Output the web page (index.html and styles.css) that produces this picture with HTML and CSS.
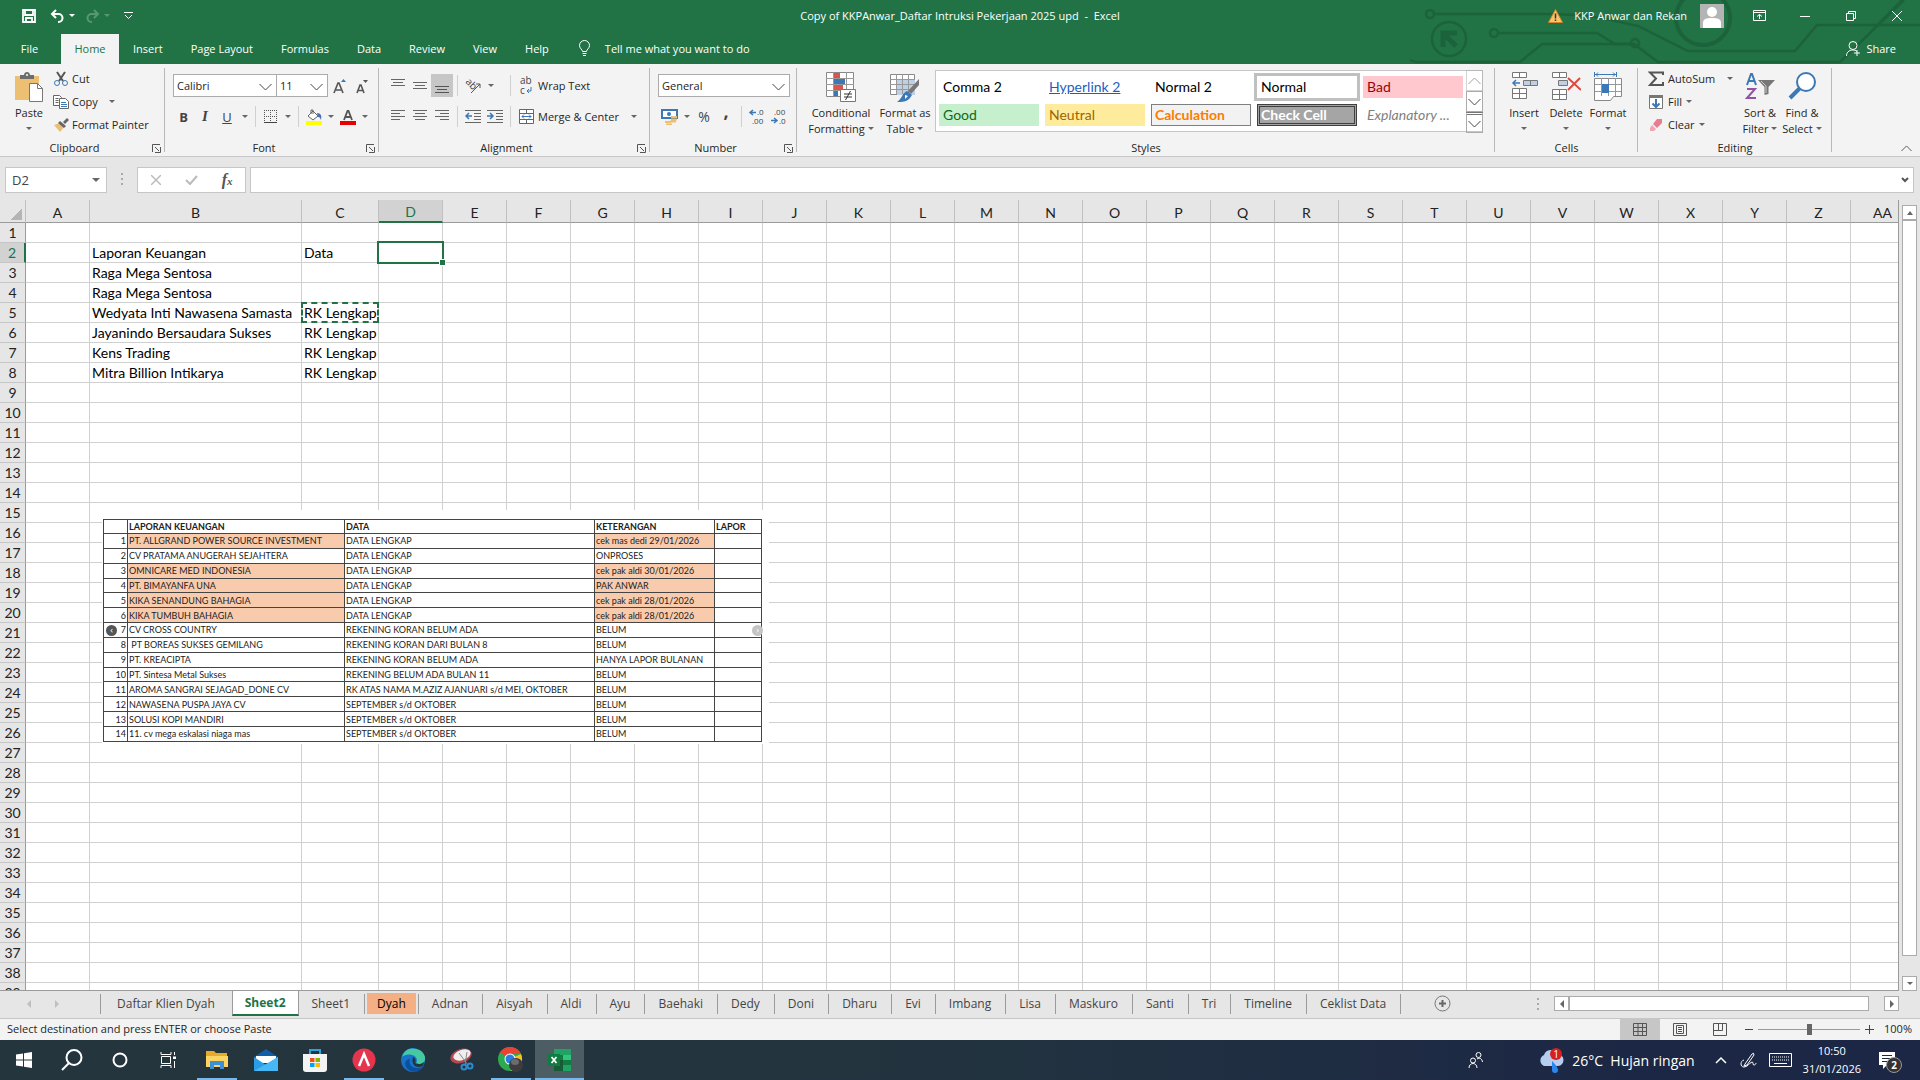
FILE: index.html
```html
<!DOCTYPE html>
<html lang="en">
<head>
  <meta charset="UTF-8" />
  <meta name="viewport" content="width=device-width, initial-scale=1.0"/>
  <title>Copy of KKPAnwar_Daftar Intruksi Pekerjaan 2025 upd - Excel</title>
  <link rel="stylesheet" href="styles.css">
</head>
<body>

<!-- shared icons -->
<svg class="defs" aria-hidden="true">
  <symbol id="launcher" viewBox="0 0 9 9"><path d="M.5 8V.5H8M3 3l4 4M8.500 3v5.500H3" fill="none" stroke="#555"/></symbol>
  <symbol id="chev" viewBox="0 0 13 8"><path d="M.5 1l6 6 6-6" fill="none" stroke="#444"/></symbol>
</svg>

<header class="top">
  <svg class="circuit" width="510" height="64" viewBox="0 0 510 64" fill="none" stroke="#1c623b" stroke-width="2.500">
    <circle cx="20" cy="14" r="4"/><path d="M24 14h110c60 0 70 8 94 12l50 25h107l22-26h103"/>
    <circle cx="84" cy="33" r="4"/><path d="M89 33h98l18 11h16"/>
    <path d="M-6 62q6-3 12 0h104l22-18h92l24 18h182l64-62M447 46l45-46"/>
    <circle cx="225" cy="43" r="4"/>
    <circle cx="39" cy="39" r="17"/><path d="M33 47V33h14M34 34l12 12" stroke-width="5"/>
    <circle cx="293" cy="18" r="27" stroke-width="4"/>
  </svg>
  <div class="titlebar">
    <div class="quick">
      <button aria-label="Save"><svg width="14" height="14" viewBox="0 0 14 14"><path d="M1 1h12v12H1zM3 1v5h8V1M4 13V9h6v4" fill="none" stroke="#fff" stroke-width="1.800"/></svg></button>
      <button class="with-caret" aria-label="Undo"><svg width="15" height="14" viewBox="0 0 15 14"><path d="M6 1L2 5l4 4M2 5h6.500a4 4 0 0 1 0 8H8" fill="none" stroke="#fff" stroke-width="2"/></svg><i class="caret"></i></button>
      <button class="with-caret dim" aria-label="Redo"><svg width="15" height="14" viewBox="0 0 15 14"><path d="M9 1l4 4-4 4M13 5H6.500a4 4 0 0 0 0 8H7" fill="none" stroke="#fff" stroke-width="2"/></svg><i class="caret"></i></button>
      <button aria-label="Customize"><svg width="9" height="8" viewBox="0 0 9 8"><path d="M0 .5h9M1 3l3.500 3.500L8 3" fill="none" stroke="#fff"/></svg></button>
    </div>
    <div class="doc-title">Copy of KKPAnwar_Daftar Intruksi Pekerjaan 2025 upd &nbsp;-&nbsp; Excel</div>
    <div class="account">
      <svg width="15" height="14" viewBox="0 0 15 14"><path d="M7.500.5L14.500 13.500H.5z" fill="#f8c468" stroke="#d9822b"/><path d="M7.500 4.500v5M7.500 10.500v1.500" stroke="#333" stroke-width="1.500"/></svg>
      <span>KKP Anwar dan Rekan</span>
      <svg class="avatar" width="24" height="24" viewBox="0 0 24 24"><path d="M0 0h24v24H0z" fill="#b4b4b4"/><circle cx="12" cy="8" r="5" fill="#fff"/><path d="M3 24v-5c0-4 3-5 9-5s9 1 9 5v5z" fill="#fff"/></svg>
      <button aria-label="Ribbon display"><svg width="13" height="11" viewBox="0 0 13 11"><path d="M.5.5h12v10H.5zM.5 2.500h12M6.500 9V4.500M4 6.500l2.500-2 2.500 2" fill="none" stroke="#fff"/></svg></button>
      <button aria-label="Minimize"><svg width="10" height="10" viewBox="0 0 10 10"><path d="M0 5.500h10" stroke="#fff"/></svg></button>
      <button aria-label="Restore"><svg width="10" height="10" viewBox="0 0 10 10"><path d="M.5 2.500h7v7h-7zM2.500 2.500v-2h7v7h-2" fill="none" stroke="#fff"/></svg></button>
      <button aria-label="Close"><svg width="10" height="10" viewBox="0 0 10 10"><path d="M0 0l10 10M10 0L0 10" stroke="#fff"/></svg></button>
    </div>
  </div>
  <nav class="menu">
    <button class="file">File</button>
    <button class="active">Home</button>
    <button>Insert</button>
    <button>Page Layout</button>
    <button>Formulas</button>
    <button>Data</button>
    <button>Review</button>
    <button>View</button>
    <button>Help</button>
    <button class="tell"><svg width="11" height="16" viewBox="0 0 11 16"><path d="M3.500 11.500c0-2-3-3-3-6a5 5 0 0 1 10 0c0 3-3 4-3 6zM3.500 13.500h4M4 15.500h3" fill="none" stroke="#fff"/></svg>Tell me what you want to do</button>
    <button class="share"><svg width="15" height="15" viewBox="0 0 15 15"><circle cx="7" cy="4.500" r="4" fill="none" stroke="#fff"/><path d="M.5 15c0-3 2-6 6.500-6 1.500 0 3 .5 4 1.500M8 12h6M11 9v6" fill="none" stroke="#fff"/></svg>Share</button>
  </nav>
</header>

<div class="ribbon">
  <!-- Clipboard -->
  <section class="group clipboard">
    <div class="tools">
      <button class="big paste">
        <svg width="30" height="30" viewBox="0 0 30 30"><path d="M1 4h24v24H1z" fill="#ecbf73"/><path d="M6 3h4c0-4 6-4 6 0h4v4H6z" fill="#6d6d6d"/><circle cx="13" cy="3" r="1" fill="#fff"/><path d="M15.500 11.500h8l5 5v13h-13z" fill="#fff" stroke="#777"/><path d="M23.500 11.500v5h5" fill="none" stroke="#777"/></svg>
        <span>Paste</span><i class="caret"></i>
      </button>
      <div class="stack">
        <button><svg width="16" height="16" viewBox="0 0 16 16"><path d="M4 1l6 9M12 1L6 10" stroke="#555" stroke-width="2"/><circle cx="4" cy="12" r="2.500" fill="none" stroke="#3b78b5"/><circle cx="12" cy="12" r="2.500" fill="none" stroke="#3b78b5"/></svg>Cut</button>
        <button><svg width="16" height="16" viewBox="0 0 16 16"><path d="M.5 1.500h6l2 2v8h-8zM2.500 4.500h3M2.500 6.500h3M2.500 8.500h3" fill="#fff" stroke="#666"/><path d="M6.500 4.500h6l3 3v7h-9z" fill="#fff" stroke="#666"/><path d="M8 8.500h5M8 10.500h6M8 12.500h6" stroke="#3b78b5"/></svg>Copy<i class="caret far"></i></button>
        <button><svg width="16" height="16" viewBox="0 0 16 16"><path d="M1 8l6-2 4 4-4 5z" fill="#ecbf73"/><path d="M7 4l6 5-2 2-6-5zM10 5l4-4 2 2-4 4z" fill="#666"/></svg>Format Painter</button>
      </div>
    </div>
    <h2>Clipboard<svg class="launch" width="9" height="9"><use href="#launcher"/></svg></h2>
  </section>

  <!-- Font -->
  <section class="group font">
    <div class="tools rows">
      <div class="row">
        <span class="combo fname"><select aria-label="Font"><option>Calibri</option></select><svg width="13" height="8"><use href="#chev"/></svg></span>
        <span class="combo fsize"><select aria-label="Font size"><option>11</option></select><svg width="13" height="8"><use href="#chev"/></svg></span>
        <button class="ic" aria-label="Increase font"><svg width="14" height="16" viewBox="0 0 14 16"><path d="M1 15L5 5h1l4 10M3 12h5" fill="none" stroke="#555" stroke-width="1.600"/><path d="M8 4l2.500-3L13 4z" fill="#3b78b5"/></svg></button>
        <button class="ic" aria-label="Decrease font"><svg width="14" height="16" viewBox="0 0 14 16"><path d="M2 15l3-8h1l3 8M3.500 12.500h4" fill="none" stroke="#555" stroke-width="1.600"/><path d="M8 2l2.500 3L13 2z" fill="#555"/></svg></button>
      </div>
      <div class="row">
        <button class="ic wide letter"><b>B</b></button>
        <button class="ic letter serif"><i>I</i></button>
        <button class="ic letter"><u>U</u></button>
        <button class="drop" aria-label="Underline style"><i class="caret"></i></button>
        <i class="sep"></i>
        <button class="ic wide" aria-label="Borders"><svg width="13" height="13" viewBox="0 0 13 13"><path d="M.5 0v12M12.500 0v12M6.500 0v12M0 .5h13M0 6.500h13" stroke="#555" stroke-dasharray="1 1"/><path d="M0 12.500h13" stroke="#444"/></svg></button>
        <button class="drop" aria-label="Border style"><i class="caret"></i></button>
        <i class="sep"></i>
        <button class="ic wide" aria-label="Fill colour"><svg width="16" height="16" viewBox="0 0 16 16"><path d="M2 7l5-5 5 5-5 4z" fill="#fff" stroke="#666"/><path d="M5 5V1h2v4" fill="none" stroke="#666"/><path d="M11 4c4 0 5 3 4 7-1-2-1-3-3-3z" fill="#4a6fae"/><path d="M0 12h16v4H0z" fill="#ff0"/></svg></button>
        <button class="drop" aria-label="Fill colours"><i class="caret"></i></button>
        <button class="ic wide" aria-label="Font colour"><svg width="16" height="16" viewBox="0 0 16 16"><path d="M4 11L7.500 2h1L12 11M5 8h6" fill="none" stroke="#555" stroke-width="1.800"/><path d="M0 12h16v4H0z" fill="#e60000"/></svg></button>
        <button class="drop" aria-label="Font colours"><i class="caret"></i></button>
      </div>
    </div>
    <h2>Font<svg class="launch" width="9" height="9"><use href="#launcher"/></svg></h2>
  </section>

  <!-- Alignment -->
  <section class="group align">
    <div class="tools rows">
      <div class="row">
        <button class="ic" aria-label="Top align"><svg width="14" height="16" viewBox="0 0 14 16"><path d="M0 1.500h14M2 4.500h10M0 7.500h14" stroke="#666"/></svg></button>
        <button class="ic" aria-label="Middle align"><svg width="14" height="16" viewBox="0 0 14 16"><path d="M0 4.500h14M2 7.500h10M0 10.500h14" stroke="#666"/></svg></button>
        <button class="ic on" aria-label="Bottom align"><svg width="14" height="16" viewBox="0 0 14 16"><path d="M0 8.500h14M2 11.500h10M0 14.500h14" stroke="#555"/></svg></button>
        <i class="sep"></i>
        <button class="ic" aria-label="Orientation"><svg class="spill" width="16" height="16" viewBox="0 0 16 16"><text x="0" y="6" font-size="10" fill="#444" transform="rotate(45 2 5)">ab</text><path d="M6 15l9-9M15 10V6h-4" fill="none" stroke="#555"/></svg></button>
        <button class="drop" aria-label="Orientation options"><i class="caret"></i></button>
        <i class="sep second"></i>
        <button class="text"><svg class="spill" width="15" height="16" viewBox="0 0 15 16"><text x="1" y="6" font-size="10" fill="#444">ab</text><text x="1" y="16" font-size="10" fill="#444">c</text><path d="M12 9v4H8M10 11l-2 2 2 2" fill="none" stroke="#3b78b5"/></svg>Wrap Text</button>
      </div>
      <div class="row">
        <button class="ic" aria-label="Align left"><svg width="14" height="13" viewBox="0 0 14 13"><path d="M0 .5h14M0 3.500h9M0 6.500h14M0 9.500h9" stroke="#666"/></svg></button>
        <button class="ic" aria-label="Centre"><svg width="14" height="13" viewBox="0 0 14 13"><path d="M0 .5h14M2 3.500h10M0 6.500h14M2 9.500h10" stroke="#666"/></svg></button>
        <button class="ic" aria-label="Align right"><svg width="14" height="13" viewBox="0 0 14 13"><path d="M0 .5h14M5 3.500h9M0 6.500h14M5 9.500h9" stroke="#666"/></svg></button>
        <i class="sep"></i>
        <button class="ic" aria-label="Decrease indent"><svg width="16" height="13" viewBox="0 0 16 13"><path d="M0 .5h16M9 3.500h7M9 6.500h7M0 12.500h16M9 9.500h7" stroke="#666"/><path d="M1 6h6M4 3L1 6l3 3" fill="none" stroke="#3b78b5" stroke-width="1.500"/></svg></button>
        <button class="ic" aria-label="Increase indent"><svg width="16" height="13" viewBox="0 0 16 13"><path d="M0 .5h16M9 3.500h7M9 6.500h7M0 12.500h16M9 9.500h7" stroke="#666"/><path d="M0 6h6M3 3l3 3-3 3" fill="none" stroke="#3b78b5" stroke-width="1.500"/></svg></button>
        <i class="sep third"></i>
        <button class="text"><svg width="15" height="15" viewBox="0 0 15 15"><path d="M.5.5h14v14H.5zM.5 4.500h14M.5 10.500h14M7.500.5v4M7.500 10.500v4" fill="#fff" stroke="#666"/><path d="M3 7.500h9M5 5.500l-2 2 2 2M10 5.500l2 2-2 2" fill="none" stroke="#3b78b5"/></svg>Merge &amp; Center<i class="caret far"></i></button>
      </div>
    </div>
    <h2>Alignment<svg class="launch" width="9" height="9"><use href="#launcher"/></svg></h2>
  </section>

  <!-- Number -->
  <section class="group number">
    <div class="tools rows">
      <div class="row">
        <span class="combo format"><select aria-label="Number format"><option>General</option></select><svg width="13" height="8"><use href="#chev"/></svg></span>
      </div>
      <div class="row">
        <button class="ic" aria-label="Accounting"><svg width="17" height="16" viewBox="0 0 17 16"><path d="M1 1h15v8H1z" fill="#fff" stroke="#3b78b5" stroke-width="2"/><circle cx="8" cy="5" r="2" fill="#3b78b5"/><path d="M10 8h6M10 10.500h6M4 13h6M9 12.500h6M5 15.500h6" stroke="#ecbf73" stroke-width="2"/></svg></button>
        <button class="drop" aria-label="Accounting formats"><i class="caret"></i></button>
        <button class="ic letter percent">%</button>
        <button class="ic letter comma"><b>,</b></button>
        <i class="sep"></i>
        <button class="ic" aria-label="Increase decimal"><svg class="spill" width="16" height="15" viewBox="0 0 16 15"><path d="M1 3.500h6M4 1L1 3.500 4 6" fill="none" stroke="#3b78b5" stroke-width="1.500"/><text x="8" y="6" font-size="8" fill="#444">.0</text><text x="3" y="15" font-size="8" fill="#444">.00</text></svg></button>
        <button class="ic" aria-label="Decrease decimal"><svg class="spill" width="16" height="15" viewBox="0 0 16 15"><path d="M0 11.500h6M3 9l3 2.500L3 14" fill="none" stroke="#3b78b5" stroke-width="1.500"/><text x="3" y="6" font-size="8" fill="#444">.00</text><text x="8" y="15" font-size="8" fill="#444">.0</text></svg></button>
      </div>
    </div>
    <h2>Number<svg class="launch" width="9" height="9"><use href="#launcher"/></svg></h2>
  </section>

  <!-- Styles -->
  <section class="group styles">
    <div class="tools">
      <button class="big cond">
        <svg width="30" height="30" viewBox="0 0 30 30"><path d="M.5.5h27v24H.5z" fill="#fff" stroke="#888"/><path d="M7.500 0v24M20.500 0v24M0 6.500h28M0 12.500h28M0 18.500h28" stroke="#999"/><path d="M8 1h6v5H8zM8 13h9v5H8z" fill="#d9534f"/><path d="M8 7h11v5H8zM8 19h4v5H8z" fill="#3b78b5"/><path d="M14.500 17.500h15v12h-15z" fill="#fff" stroke="#777"/><path d="M18 22h8M18 25h8M24.500 19l-5 9" stroke="#333"/></svg>
        <span>Conditional</span><span>Formatting<i class="caret"></i></span>
      </button>
      <button class="big fmt">
        <svg width="30" height="30" viewBox="0 0 30 30"><path d="M.5 2.500h24v20H.5z" fill="#fff" stroke="#888"/><path d="M7 8h18v15H7z" fill="#bdd0e4"/><path d="M6.500 2v20M12.500 2v20M18.500 2v20M0 7.500h25M0 12.500h25M0 17.500h25" stroke="#999"/><path d="M29 7v6l-8 9-3-3z" fill="#777"/><path d="M17 19l5 4-2 3c-3 4-8 4-13 4 5-3 5-9 10-11z" fill="#3b78b5"/><path d="M15 23l3 1-3 3z" fill="#fff"/></svg>
        <span>Format as</span><span>Table<i class="caret"></i></span>
      </button>
      <div class="gallery">
        <div class="swatches">
          <button>Comma 2</button>
          <button class="link">Hyperlink 2</button>
          <button>Normal 2</button>
          <button class="picked">Normal</button>
          <button class="bad">Bad</button>
          <button class="good">Good</button>
          <button class="neutral">Neutral</button>
          <button class="calc">Calculation</button>
          <button class="check">Check Cell</button>
          <button class="explain">Explanatory ...</button>
        </div>
        <div class="pager">
          <button class="off" aria-label="Up"><svg class="flip" width="13" height="8"><use href="#chev"/></svg></button>
          <button aria-label="Down"><svg width="13" height="8"><use href="#chev"/></svg></button>
          <button class="more" aria-label="More"><svg width="13" height="8"><use href="#chev"/></svg></button>
        </div>
      </div>
    </div>
    <h2>Styles</h2>
  </section>

  <!-- Cells -->
  <section class="group cells">
    <div class="tools">
      <button class="big">
        <svg width="30" height="30" viewBox="0 0 30 30"><path d="M3.500.5h14v5h-14zM10.500.5v5M3.500 16.500h14v10h-14zM10.500 16.500v10M3.500 21.500h14" fill="#fff" stroke="#777"/><path d="M14.500 8.500h14v5h-14zM21.500 8.500v5" fill="#bdd0e4" stroke="#777"/><path d="M4 11h7M7 8l-3 3 3 3" fill="none" stroke="#3b78b5" stroke-width="1.500"/></svg>
        <span>Insert</span><i class="caret"></i>
      </button>
      <button class="big">
        <svg width="30" height="30" viewBox="0 0 30 30"><path d="M1.500.5h14v5h-14zM8.500.5v5M1.500 17.500h14v10h-14zM8.500 17.500v10M1.500 22.500h14" fill="#fff" stroke="#777"/><path d="M7.500 8.500h9v5h-9z" fill="#bdd0e4" stroke="#777"/><path d="M17 6l13 12M29 6L17 18" stroke="#e0483e" stroke-width="2"/></svg>
        <span>Delete</span><i class="caret"></i>
      </button>
      <button class="big">
        <svg width="30" height="30" viewBox="0 0 30 30"><path d="M1.500 6.500h27v18h-8l-3 4h-16z" fill="#fff" stroke="#888"/><path d="M8.500 6v18M15.500 6v18M22.500 6v18M2 12.500h26M2 19.500h26" stroke="#999"/><path d="M9 12h7v9H9z" fill="#3b78b5"/><path d="M1.500 0v5M23.500 0v5M2 2.500h21M5 .5l-2 2 2 2M20 .5l2 2-2 2" fill="none" stroke="#3b78b5"/></svg>
        <span>Format</span><i class="caret"></i>
      </button>
    </div>
    <h2>Cells</h2>
  </section>

  <!-- Editing -->
  <section class="group editing">
    <div class="tools">
      <div class="stack">
        <button><svg width="16" height="16" viewBox="0 0 16 16"><path d="M15 4V1.500H2l6 6-6 6.500h13V11" fill="none" stroke="#555" stroke-width="2"/></svg>AutoSum<i class="caret far"></i></button>
        <button><svg width="16" height="16" viewBox="0 0 16 16"><path d="M1.500 1.500h13v13h-13z" fill="#fff" stroke="#777"/><path d="M1 1h14v3H1z" fill="#777"/><path d="M8 5v8M4.500 9.500L8 13l3.500-3.500" fill="none" stroke="#3b78b5" stroke-width="2"/></svg>Fill<i class="caret near"></i></button>
        <button><svg width="16" height="16" viewBox="0 0 16 16"><path d="M9 2h5v4l-5 5-4-4z" fill="#e87d90"/><path d="M4 8l4 4-2 2H2v-3z" fill="#f0a5b2"/></svg>Clear<i class="caret near"></i></button>
      </div>
      <button class="big">
        <svg width="30" height="30" viewBox="0 0 30 30"><path d="M2 13L6 2h1l4 11M3.500 9h6" fill="none" stroke="#3b78b5" stroke-width="2"/><path d="M2 17h8L2 26h9" fill="none" stroke="#9452a5" stroke-width="2"/><path d="M13 8h17l-6.500 7v7l-4 1v-8z" fill="#777"/><path d="M16 9l5 5v7" fill="none" stroke="#ccc"/></svg>
        <span>Sort &amp;</span><span>Filter<i class="caret"></i></span>
      </button>
      <button class="big">
        <svg width="30" height="30" viewBox="0 0 30 30"><circle cx="19" cy="10" r="9" fill="#fff" stroke="#3b78b5" stroke-width="2"/><path d="M12.500 16.500L3 26" stroke="#3b78b5" stroke-width="4"/></svg>
        <span>Find &amp;</span><span>Select<i class="caret"></i></span>
      </button>
    </div>
    <h2>Editing</h2>
  </section>
  <button class="collapse" aria-label="Collapse ribbon"><svg class="flip" width="11" height="7" viewBox="0 0 13 8"><use href="#chev"/></svg></button>
</div>

<div class="formula-bar">
  <div class="name-box"><input type="text" aria-label="Name box" value="D2"><i class="caret"></i></div>
  <svg class="grip" width="2" height="14" viewBox="0 0 2 14"><path d="M0 1h2M0 6h2M0 11h2" stroke="#aaa" stroke-width="2"/></svg>
  <div class="fx">
    <button aria-label="Cancel"><svg width="10" height="10" viewBox="0 0 10 10"><path d="M0 0l10 10M10 0L0 10" stroke="#bbb" stroke-width="1.500"/></svg></button>
    <button aria-label="Enter"><svg width="13" height="10" viewBox="0 0 13 10"><path d="M1 5l4 4 7-8" fill="none" stroke="#bbb" stroke-width="2"/></svg></button>
    <button class="fn" aria-label="Insert function"><i>f<small>x</small></i></button>
  </div>
  <div class="formula"><input type="text" aria-label="Formula"><svg width="8" height="6" viewBox="0 0 8 6"><path d="M1 1l3 3 3-3" fill="none" stroke="#555" stroke-width="2"/></svg></div>
</div>

<main class="sheet-area">
  <div class="sheet">
    <table class="grid" id="grid"></table>

    <!-- pasted table -->
    <div class="pasted">
      <table>
        <colgroup><col class="p-no"><col class="p-name"><col class="p-data"><col class="p-ket"><col class="p-lapor"></colgroup>
        <thead>
          <tr><th></th><th>LAPORAN KEUANGAN</th><th>DATA</th><th>KETERANGAN</th><th>LAPOR</th></tr>
        </thead>
        <tbody>
          <tr class="hl"><td>1</td><td>PT. ALLGRAND POWER SOURCE INVESTMENT</td><td>DATA LENGKAP</td><td>cek mas dedi 29/01/2026</td><td></td></tr>
          <tr><td>2</td><td>CV PRATAMA ANUGERAH SEJAHTERA</td><td>DATA LENGKAP</td><td>ONPROSES</td><td></td></tr>
          <tr class="hl"><td>3</td><td>OMNICARE MED INDONESIA</td><td>DATA LENGKAP</td><td>cek pak aldi 30/01/2026</td><td></td></tr>
          <tr class="hl"><td>4</td><td>PT. BIMAYANFA UNA</td><td>DATA LENGKAP</td><td>PAK ANWAR</td><td></td></tr>
          <tr class="hl"><td>5</td><td>KIKA SENANDUNG BAHAGIA</td><td>DATA LENGKAP</td><td>cek pak aldi 28/01/2026</td><td></td></tr>
          <tr class="hl"><td>6</td><td>KIKA TUMBUH BAHAGIA</td><td>DATA LENGKAP</td><td>cek pak aldi 28/01/2026</td><td></td></tr>
          <tr><td>7</td><td>CV CROSS COUNTRY</td><td>REKENING KORAN BELUM ADA</td><td>BELUM</td><td></td></tr>
          <tr><td>8</td><td>&nbsp;PT BOREAS SUKSES GEMILANG</td><td>REKENING KORAN DARI BULAN 8</td><td>BELUM</td><td></td></tr>
          <tr><td>9</td><td>PT. KREACIPTA</td><td>REKENING KORAN BELUM ADA</td><td>HANYA LAPOR BULANAN</td><td></td></tr>
          <tr><td>10</td><td>PT. Sintesa Metal Sukses</td><td>REKENING BELUM ADA BULAN 11</td><td>BELUM</td><td></td></tr>
          <tr><td>11</td><td>AROMA SANGRAI SEJAGAD_DONE CV</td><td>RK ATAS NAMA M.AZIZ AJANUARI s/d MEI, OKTOBER</td><td>BELUM</td><td></td></tr>
          <tr><td>12</td><td>NAWASENA PUSPA JAYA CV</td><td>SEPTEMBER s/d OKTOBER</td><td>BELUM</td><td></td></tr>
          <tr><td>13</td><td>SOLUSI KOPI MANDIRI</td><td>SEPTEMBER s/d OKTOBER</td><td>BELUM</td><td></td></tr>
          <tr><td>14</td><td>11. cv mega eskalasi niaga mas</td><td>SEPTEMBER s/d OKTOBER</td><td>BELUM</td><td></td></tr>
        </tbody>
      </table>
      <span class="arrow prev">‹</span>
      <span class="arrow next">›</span>
    </div>
  </div>
  <div class="vscroll">
    <button aria-label="Scroll up"><i class="caret up"></i></button>
    <div class="thumb"></div>
    <button aria-label="Scroll down"><i class="caret"></i></button>
  </div>
</main>

<footer class="sheet-tabs">
  <div class="tab-nav"><i class="tri left"></i><i class="tri right"></i></div>
  <button>Daftar Klien Dyah</button>
  <button class="current">Sheet2</button>
  <button>Sheet1</button>
  <button class="orange"><span>Dyah</span></button>
  <button>Adnan</button>
  <button>Aisyah</button>
  <button>Aldi</button>
  <button>Ayu</button>
  <button>Baehaki</button>
  <button>Dedy</button>
  <button>Doni</button>
  <button>Dharu</button>
  <button>Evi</button>
  <button>Imbang</button>
  <button>Lisa</button>
  <button>Maskuro</button>
  <button>Santi</button>
  <button>Tri</button>
  <button>Timeline</button>
  <button>Ceklist Data</button>
  <button class="add" aria-label="New sheet"><svg width="17" height="17" viewBox="0 0 17 17"><circle cx="8.500" cy="8.500" r="7.500" fill="none" stroke="#777"/><path d="M8.500 5v7M5 8.500h7" stroke="#666" stroke-width="2"/></svg></button>
  <svg class="grip" width="2" height="12" viewBox="0 0 2 12"><path d="M0 1h2M0 6h2M0 11h2" stroke="#aaa" stroke-width="2"/></svg>
  <div class="hscroll">
    <button aria-label="Scroll left"><i class="tri left"></i></button>
    <div class="thumb"></div>
    <button aria-label="Scroll right"><i class="tri right"></i></button>
  </div>
</footer>

<div class="status">
  <span class="msg">Select destination and press ENTER or choose Paste</span>
  <button class="view on" aria-label="Normal view"><svg width="14" height="13" viewBox="0 0 14 13"><path d="M.5.5h13v12H.5zM.5 4.500h13M.5 8.500h13M5 .5v12M9.500.5v12" fill="none" stroke="#555"/></svg></button>
  <button class="view" aria-label="Page layout view"><svg width="14" height="13" viewBox="0 0 14 13"><path d="M.5.5h13v12H.5zM3.500 2.500h7v8h-7zM5 4.500h4M5 6.500h4M5 8.500h4" fill="none" stroke="#555"/></svg></button>
  <button class="view" aria-label="Page break view"><svg width="14" height="13" viewBox="0 0 14 13"><path d="M.5.5h13v12H.5zM5.500.5v7M9.500.5v7M.5 7.500h9" fill="none" stroke="#555"/></svg></button>
  <button class="zoom" aria-label="Zoom out"><svg width="8" height="9" viewBox="0 0 8 9"><path d="M0 4.500h8" stroke="#444"/></svg></button>
  <input type="range" aria-label="Zoom" min="0" max="100" value="50">
  <button class="zoom" aria-label="Zoom in"><svg width="9" height="9" viewBox="0 0 9 9"><path d="M0 4.500h9M4.500 0v9" stroke="#444"/></svg></button>
  <span class="pct">100%</span>
</div>

<div class="taskbar">
  <button aria-label="Start"><svg width="16" height="16" viewBox="0 0 16 16"><path d="M0 2.500L7 1.500V7.500H0zM8 1.300L16 0v7.500H8zM0 8.500h7v6l-7-1zM8 8.500h8V16l-8-1.300z" fill="#fff"/></svg></button>
  <button aria-label="Search"><svg width="22" height="22" viewBox="0 0 22 22"><circle cx="13" cy="8.500" r="7.500" fill="none" stroke="#fff" stroke-width="2"/><path d="M8 14l-7 7" stroke="#fff" stroke-width="2"/></svg></button>
  <button aria-label="Cortana"><svg width="16" height="16" viewBox="0 0 16 16"><circle cx="8" cy="8" r="6.500" fill="none" stroke="#fff" stroke-width="2"/></svg></button>
  <button aria-label="Task view"><svg width="17" height="16" viewBox="0 0 17 16"><path d="M1 0v2.500h10V0M1 16v-2.500h10V16M1.500 4.500h9v7h-9zM14.500 0v3M14.500 9v7" fill="none" stroke="#fff"/><path d="M13 4.500h3v2.500h-3z" fill="#fff"/></svg></button>
  <button class="run" aria-label="File Explorer"><svg width="22" height="20" viewBox="0 0 22 20"><path d="M0 1h8l2 2h11v5H0z" fill="#e8a92c"/><path d="M0 6h22v11H0z" fill="#fcd462"/><path d="M4 19v-8h14v8h-4v-4H8v4z" fill="#3d8fd6"/></svg></button>
  <button aria-label="Mail"><svg width="24" height="22" viewBox="0 0 24 22"><path d="M0 8L12 0l12 8v3H0z" fill="#0f5ea8"/><path d="M2 7h20v7H2z" fill="#fff"/><path d="M0 8l12 8L24 8v14H0z" fill="#2a9de8"/><path d="M0 22L24 8v14z" fill="#47b8f5"/></svg></button>
  <button aria-label="Store"><svg width="24" height="23" viewBox="0 0 24 23"><path d="M7 5V1h10v4" fill="none" stroke="#2ba3e0" stroke-width="2"/><path d="M0 5h24v15q0 3-3 3H3q-3 0-3-3z" fill="#f3f3f3"/><path d="M7 9h4.500v4H7z" fill="#f25022"/><path d="M12.500 9H17v4h-4.500z" fill="#7fba00"/><path d="M7 14h4.500v4H7z" fill="#00a4ef"/><path d="M12.500 14H17v4h-4.500z" fill="#ffb900"/></svg></button>
  <button class="run" aria-label="Launcher"><svg width="24" height="24" viewBox="0 0 24 24"><circle cx="12" cy="12" r="11.500" fill="#e5344e"/><path d="M7 18l5-12 5 12" fill="none" stroke="#fff" stroke-width="2.500"/></svg></button>
  <button aria-label="Edge"><svg width="24" height="24" viewBox="0 0 24 24"><circle cx="12" cy="12" r="12" fill="#1673c9"/><path d="M1 9C3 2 9-1 15 1c6 1 10 6 9 11-1 4-6 5-9 3 2-2 1-7-4-8-4-1-8 0-10 2z" fill="#46c9a2"/><path d="M9 11c-2 5 2 10 8 9 3 0 4-1 5-2-3 7-13 8-17 1-2-4 0-8 4-8z" fill="#0c4f9c"/><path d="M12 9c3 1 3 5 2 6 3 2 7 1 9-1l-1 4c-8 3-12-2-10-9z" fill="#213540"/></svg></button>
  <button aria-label="Snip"><svg width="24" height="24" viewBox="0 0 24 24"><ellipse cx="11" cy="8" rx="11" ry="7" fill="#b7474e" transform="rotate(-20 11 8)"/><ellipse cx="12" cy="7" rx="9" ry="5" fill="#eee" transform="rotate(-20 12 7)"/><path d="M9 5l9 12M17 4l-2 13" stroke="#888"/><circle cx="14" cy="19" r="2.500" fill="none" stroke="#2f8ad0" stroke-width="2"/><circle cx="20" cy="18" r="2.500" fill="none" stroke="#2f8ad0" stroke-width="2"/></svg></button>
  <button class="run" aria-label="Chrome"><svg width="26" height="26" viewBox="0 0 26 26"><circle cx="12" cy="12" r="12" fill="#2da94f"/><path d="M12 12L2 5.500A12 12 0 0 1 23 7H12z" fill="#e94335"/><path d="M12 12l11-5a12 12 0 0 1-10 17z" fill="#fcc31e"/><circle cx="12" cy="12" r="5.500" fill="#fff"/><circle cx="12" cy="12" r="4.500" fill="#2a7de1"/><circle cx="18" cy="18" r="7" fill="#3d3d3f"/><ellipse cx="17" cy="15" rx="4" ry="3" fill="#6b6b70"/></svg></button>
  <button class="run front" aria-label="Excel"><svg width="24" height="22" viewBox="0 0 24 22"><path d="M6 0h17v22H6z" fill="#21a366"/><path d="M6 6h9v5H6z" fill="#107c41"/><path d="M15 6h8v5h-8z" fill="#33c481"/><path d="M6 11h9v11H6z" fill="#185c37"/><path d="M15 11h8v5h-8z" fill="#107c41"/><path d="M0 5h12v12H0z" fill="#107c41"/><path d="M3.500 8l5 6M8.500 8l-5 6" stroke="#fff" stroke-width="1.800"/></svg></button>

  <div class="tray">
    <svg class="people" width="15" height="17" viewBox="0 0 15 17"><circle cx="10.500" cy="3" r="2.500" fill="none" stroke="#fff"/><circle cx="5" cy="8.500" r="2.500" fill="none" stroke="#fff"/><path d="M1 16c0-6 8-6 8 0M9 7c3-2 5 0 5.500 3" fill="none" stroke="#fff"/></svg>
    <div class="weather">
      <svg class="spill" width="26" height="26" viewBox="0 0 26 26"><path d="M6 19a6 6 0 0 1 0-11 7 7 0 0 1 13-1 6 6 0 0 1 1 12z" fill="#b7cdf0"/><path d="M14 14q6 6 6 9a3 3 0 0 1-6 0z" fill="#2b87ee"/><circle cx="18" cy="7" r="6" fill="#d42020"/><text x="18" y="11" font-size="10" fill="#fff" text-anchor="middle">1</text></svg>
      <span>26°C&nbsp; Hujan ringan</span>
    </div>
    <svg class="t-up" width="12" height="8" viewBox="0 0 12 8"><path d="M1 7l5-5 5 5" fill="none" stroke="#fff" stroke-width="1.500"/></svg>
    <svg class="t-pen" width="17" height="17" viewBox="0 0 17 17"><path d="M5 12l7-10q2-2 2 1L7 13l-3 1zM4 8c-4 1-4 7 0 7s5-4 8-5c2 0 0 3 2 3 1 0 2-1 2-2" fill="none" stroke="#fff"/></svg>
    <svg class="t-kbd" width="23" height="14" viewBox="0 0 23 14"><path d="M.5.5h22v13H.5z" fill="none" stroke="#fff"/><path d="M3 4h18M3 7h18" stroke="#fff" stroke-dasharray="1 1"/><path d="M5 10.500h13" stroke="#fff"/></svg>
    <div class="clock"><span>10:50</span><span>31/01/2026</span></div>
    <div class="notice"><svg width="16" height="17" viewBox="0 0 16 17"><path d="M0 0h16v13H8l-4 4v-4H0z" fill="#fff"/><path d="M3 3.500h10M3 6.500h10M3 9.500h6" stroke="#1d2740"/></svg><b>2</b></div>
  </div>
</div>

<script>
  const cells = {
    B2: "Laporan Keuangan", C2: "Data",
    B3: "Raga Mega Sentosa",
    B4: "Raga Mega Sentosa",
    B5: "Wedyata Inti Nawasena Samasta", C5: "RK Lengkap",
    B6: "Jayanindo Bersaudara Sukses", C6: "RK Lengkap",
    B7: "Kens Trading", C7: "RK Lengkap",
    B8: "Mitra Billion Intikarya", C8: "RK Lengkap"
  };
  const cols = [..."ABCDEFGHIJKLMNOPQRSTUVWXYZ", "AA"];

  let html = '<colgroup><col class="c-head">';
  cols.forEach(c => html += `<col class="c-${c}">`);
  html += '</colgroup><thead><tr><th class="corner"></th>';
  cols.forEach(c => html += `<th class="${c === "D" ? "sel" : ""}">${c}</th>`);
  html += "</tr></thead><tbody>";

  for (let r = 1; r <= 39; r++) {
    html += `<tr><th class="${r === 2 ? "sel" : ""}">${r}</th>`;
    cols.forEach(c => {
      const id = c + r;
      const cls = id === "D2" ? "cursor" : id === "C5" ? "copied" : "";
      html += `<td class="${cls}">${cells[id] || ""}</td>`;
    });
    html += "</tr>";
  }
  document.getElementById("grid").innerHTML = html + "</tbody>";
</script>

</body>
</html>
```

FILE: styles.css
```css
* {
  box-sizing: border-box;
}

body {
  margin: 0;
  height: 100vh;
  display: flex;
  flex-direction: column;
  overflow: hidden;
  font-family: "Open Sans", "Noto Sans", sans-serif;
  font-size: 11px;
  color: #262626;
  background: #e6e6e6;
}

button {
  font: inherit;
  color: inherit;
  background: none;
  border: none;
  padding: 0;
  display: flex;
  align-items: center;
  justify-content: center;
  white-space: nowrap;
}

input, select {
  font: inherit;
  color: inherit;
  border: none;
  outline: none;
  background: none;
  padding: 0;
  min-width: 0;
}

svg {
  flex: none;
  display: block;
}

.defs {
  position: absolute;
  width: 0;
  height: 0;
}

.spill {
  overflow: visible;
}

.caret {
  flex: none;
  display: inline-block;
  border: 3px solid transparent;
  border-top-color: #666;
  border-bottom-width: 0;
}

.caret.up {
  border-top-width: 0;
  border-bottom: 4px solid #666;
}

.flip {
  transform: rotate(180deg);
}

/* title bar and menu */
.top {
  position: relative;
  flex: none;
  background: #217346;
  color: #fff;
}

.circuit {
  position: absolute;
  right: 0;
  top: 0;
}

.titlebar {
  position: relative;
  display: grid;
  grid-template-columns: 1fr auto 1fr;
  align-items: center;
  height: 34px;
  padding-bottom: 3px;
}

.quick {
  display: flex;
  align-items: center;
  gap: 14px;
  padding-left: 22px;
}

.quick .with-caret {
  gap: 4px;
}

.quick .with-caret:nth-child(3) {
  margin-left: -4px;
}

.quick .caret {
  border-top-color: #fff;
}

.quick .dim {
  opacity: 0.25;
}

.account {
  display: flex;
  align-items: center;
  justify-content: flex-end;
}

.account span {
  margin: 0 13px 0 11px;
}

.account .avatar {
  margin-right: 12px;
}

.account button {
  width: 46px;
  height: 30px;
}

.menu {
  position: relative;
  display: flex;
  height: 30px;
}

.menu button {
  padding: 0 14px 2px;
}

.menu .file {
  width: 61px;
  padding-right: 16px;
}

.menu .active {
  width: 58px;
  background: #f3f3f3;
  color: #217346;
}

.menu .tell {
  gap: 15px;
  margin-left: 2px;
}

.menu .share {
  gap: 5px;
  margin-left: auto;
  padding-right: 24px;
}

/* ribbon */
.ribbon {
  flex: none;
  display: flex;
  height: 93px;
  padding-top: 3px;
  background: #f3f3f3;
  border-bottom: 1px solid #c8c8c8;
}

.group {
  position: relative;
  flex: none;
  display: flex;
  flex-direction: column;
  height: 89px;
}

.group::after {
  content: "";
  position: absolute;
  right: 0;
  top: 1px;
  bottom: 4px;
  width: 1px;
  background: #b8b8b8;
}

.clipboard { width: 165px; }
.font { width: 214px; }
.align { width: 271px; }
.number { width: 147px; }
.styles { width: 698px; }
.cells { width: 143px; }
.editing { width: 194px; }

.group h2 {
  position: relative;
  margin: 0;
  height: 16px;
  padding-right: 16px;
  font-size: 11px;
  font-weight: normal;
  line-height: 16px;
  text-align: center;
}

.styles h2, .cells h2, .editing h2 {
  padding-right: 0;
}

.launch {
  position: absolute;
  right: 4px;
  top: 4px;
}

.tools {
  flex: 1;
  display: flex;
  align-items: flex-start;
}

.tools.rows {
  flex-direction: column;
  padding: 7px 0 0 8px;
  gap: 8px;
}

.row {
  display: flex;
  align-items: center;
  height: 23px;
}

.row .sep {
  width: 1px;
  height: 21px;
  margin: 0 4px;
  background: #d0d0d0;
}

.big {
  flex-direction: column;
  justify-content: flex-start;
  width: 42px;
  padding-top: 5px;
  line-height: 16px;
}

.big svg {
  margin-bottom: 3px;
}

.big > .caret {
  margin-top: 6px;
}

.big span .caret {
  margin: 0 0 3px 3px;
}

.paste {
  margin-left: 8px;
}

.stack button {
  height: 23px;
  gap: 3px;
}

.stack {
  margin-left: 3px;
}

.caret.far {
  margin-left: 8px;
}

.combo {
  position: relative;
  height: 23px;
  border: 1px solid #ababab;
  background: #fff;
}

.combo select {
  width: 100%;
  height: 100%;
  padding-left: 3px;
  appearance: none;
}

.combo svg {
  position: absolute;
  right: 4px;
  top: 8px;
  pointer-events: none;
}

.fname { width: 104px; }
.fsize { width: 51px; border-left: none; margin-right: 1px; }
.format { width: 132px; }

.ic {
  width: 22px;
  height: 23px;
}

.ic.on {
  background: #c6c6c6;
}

.ic.wide {
  width: 21px;
}

.drop {
  width: 13px;
  height: 23px;
}

.letter {
  font-size: 13px;
  color: #444;
}

.serif {
  font-family: "Liberation Serif", serif;
  font-size: 15px;
  font-weight: bold;
}

.percent {
  font-size: 14px;
}

.comma {
  padding-bottom: 12px;
  font-size: 18px;
}

.align .row .second {
  margin-left: 18px;
  margin-right: 8px;
}

.align .row .third {
  margin-right: 8px;
}

.align .drop {
  margin-right: -5px;
}

.text {
  gap: 4px;
}

.styles .cond {
  width: 70px;
  margin-left: 9px;
}

.styles .fmt {
  width: 58px;
}

.gallery {
  display: flex;
  margin-top: 3px;
  margin-left: 1px;
  border: 1px solid #c6c6c6;
  background: #fff;
  height: 62px;
}

.swatches {
  display: grid;
  grid-template-columns: repeat(5, 100px);
  grid-auto-rows: 22px;
  gap: 6px;
  padding: 5px 4px 0 3px;
}

.swatches button {
  justify-content: flex-start;
  padding: 0 0 2px 4px;
  font-family: Lato, sans-serif;
  font-size: 14px;
  color: #000;
}

.swatches .link { color: #1a5fc0; text-decoration: underline; }
.swatches .bad { background: #ffc7ce; color: #9c0006; }
.swatches .good { background: #c6efce; color: #0b6b14; }
.swatches .neutral { background: #ffeb9c; color: #9c6500; }

.swatches .picked {
  outline: 3px solid #c0c0c0;
}

.swatches .calc {
  border: 1px solid #7f7f7f;
  padding-left: 3px;
  background: #f2f2f2;
  color: #fa7d00;
  font-weight: bold;
}

.swatches .check {
  border: 3px double #3f3f3f;
  padding-left: 1px;
  background: #a5a5a5;
  color: #fff;
  font-weight: bold;
}

.swatches .explain {
  color: #7f7f7f;
  font-style: italic;
}

.pager {
  width: 17px;
  margin: -1px;
}

.pager button {
  width: 17px;
  height: 21px;
  border: 1px solid #ababab;
}

.pager .off {
  opacity: 0.5;
}

.pager .more {
  border-top: 3px double #777;
}

.cells .tools {
  padding-left: 8px;
}

.editing .stack {
  width: 91px;
  margin-left: 10px;
}

.editing .stack button {
  gap: 4px;
}

.collapse {
  width: 12px;
  margin-left: auto;
  margin-right: 8px;
  padding-top: 74px;
}

/* formula bar */
.formula-bar {
  flex: none;
  display: flex;
  align-items: center;
  height: 43px;
  padding: 3px 6px 0 5px;
}

.name-box, .fx, .formula {
  display: flex;
  align-items: center;
  height: 26px;
  border: 1px solid #c6c6c6;
  background: #fff;
}

.name-box {
  width: 102px;
  padding: 0 6px;
  font-size: 13px;
  color: #444;
}

.name-box input {
  flex: 1;
}

.name-box .caret {
  border-width: 4px 4px 0;
}

.formula-bar .grip {
  margin: 0 14px;
}

.fx {
  width: 109px;
  margin-right: 4px;
}

.fx button {
  flex: 1;
  height: 24px;
}

.fx .fn {
  font-family: "Liberation Serif", serif;
  font-size: 16px;
  font-weight: bold;
  color: #555;
}

.fx small {
  font-size: 11px;
}

.formula {
  flex: 1;
  padding-right: 4px;
}

.formula input {
  flex: 1;
}

/* grid */
.sheet-area {
  flex: 1;
  min-height: 0;
  display: flex;
}

.sheet {
  position: relative;
  flex: 1;
  min-width: 0;
  overflow: hidden;
  border-right: 1px solid #9b9b9b;
  border-bottom: 1px solid #9b9b9b;
}

.grid {
  width: 1915px;
  table-layout: fixed;
  border-collapse: separate;
  border-spacing: 0;
  font-family: Lato, sans-serif;
  font-size: 14px;
  line-height: 19px;
  color: #000;
}

.grid col { width: 64px; }
.grid .c-head { width: 26px; }
.grid .c-B { width: 212px; }
.grid .c-C { width: 77px; }

.grid th {
  height: 20px;
  padding: 0;
  background: #e6e6e6;
  border-right: 1px solid #9b9b9b;
  border-bottom: 1px solid #c6c6c6;
  font-weight: normal;
  color: #222;
}

.grid thead th {
  height: 23px;
  padding-top: 3px;
  border-right-color: #c0c0c0;
  border-bottom-color: #9b9b9b;
}

.grid thead .sel {
  background: #d2d2d2;
  border-bottom: 2px solid #217346;
  color: #217346;
  line-height: 18px;
}

.grid tbody .sel {
  background: #d2d2d2;
  border-right: 2px solid #217346;
  color: #217346;
}

.grid .corner {
  background: linear-gradient(135deg, #e6e6e6 0 50%, #b4b4b4 50%) no-repeat 11px 8px / 11px 12px #e6e6e6;
}

.grid td {
  position: relative;
  height: 20px;
  padding: 0 0 0 2px;
  background: #fff;
  border-right: 1px solid #d0d0d0;
  border-bottom: 1px solid #d0d0d0;
  white-space: nowrap;
}

.grid .cursor, .grid .copied {
  z-index: 1;
}

.cursor::before {
  content: "";
  position: absolute;
  inset: -2px;
  border: 2px solid #217346;
}

.cursor::after {
  content: "";
  position: absolute;
  right: -3px;
  bottom: -3px;
  width: 5px;
  height: 5px;
  background: #217346;
  outline: 1px solid #fff;
}

.copied::after {
  content: "";
  position: absolute;
  inset: -1px;
  border: 2px dashed #217346;
}

/* pasted table sits over the cells */
.pasted {
  position: absolute;
  z-index: 2;
  left: 102px;
  top: 310px;
  width: 667px;
  height: 234px;
  padding: 9px 0 0 1px;
  background: #fff;
}

.pasted table {
  width: 658px;
  height: 223px;
  table-layout: fixed;
  border-collapse: collapse;
  font-family: Lato, sans-serif;
  font-size: 9px;
  line-height: 12px;
  color: #222;
}

.p-no { width: 24px; }
.p-name { width: 217px; }
.p-data { width: 250px; }
.p-ket { width: 120px; }
.p-lapor { width: 47px; }

.pasted th, .pasted td {
  padding: 1px 1px 0;
  border: 1px solid #444;
  text-align: left;
  white-space: nowrap;
}

.pasted td:first-child {
  text-align: right;
}

.pasted .hl td:nth-child(2), .pasted .hl td:nth-child(4) {
  background: #f8cbad;
}

.arrow {
  position: absolute;
  top: 115px;
  width: 11px;
  height: 11px;
  border-radius: 50%;
  font-size: 9px;
  line-height: 9px;
  text-align: center;
  color: #fff;
}

.prev { left: 4px; background: #555; }
.next { right: 6px; background: #c4c4c4; }

/* scroll bars */
.vscroll {
  flex: none;
  display: flex;
  flex-direction: column;
  width: 21px;
  padding: 5px 3px 0;
}

.vscroll button, .hscroll button {
  width: 15px;
  height: 15px;
  border: 1px solid #ababab;
  background: #fff;
}

.thumb {
  flex: 1;
  border: 1px solid #ababab;
  background: #fff;
}

.vscroll .thumb {
  margin-bottom: 20px;
}

.tri {
  border: 4px solid transparent;
}

.tri.left {
  border-left-width: 0;
  border-right-color: #666;
}

.tri.right {
  border-right-width: 0;
  border-left-color: #666;
}

/* sheet tabs */
.sheet-tabs {
  flex: none;
  display: flex;
  align-items: center;
  height: 28px;
  padding-right: 21px;
  padding-bottom: 2px;
  border-bottom: 1px solid #c6c6c6;
  font-size: 12px;
  color: #444;
}

.tab-nav {
  display: flex;
  align-items: center;
  gap: 24px;
  width: 101px;
  height: 20px;
  padding-left: 27px;
  border-right: 1px solid #9b9b9b;
}

.tab-nav .tri {
  opacity: 0.3;
}

.sheet-tabs > button {
  height: 20px;
  padding: 0 14px 0 13px;
  border-right: 1px solid #9b9b9b;
}

.sheet-tabs > button:nth-child(2) {
  padding: 0 17px 0 16px;
  border-right: none;
}

.sheet-tabs > .current {
  align-self: flex-start;
  height: 25px;
  padding: 0 12px;
  border: 1px solid #9b9b9b;
  border-top: none;
  border-bottom: 2px solid #217346;
  background: #fff;
  color: #217346;
  font-weight: bold;
}

.sheet-tabs > .orange {
  padding: 0 2px;
}

.orange span {
  padding: 2px 10px;
  background: #f4b084;
  color: #000;
}

.sheet-tabs > .add {
  margin-left: 20px;
  border: none;
}

.sheet-tabs .grip {
  margin-left: auto;
  margin-right: 15px;
}

.hscroll {
  display: flex;
  width: 345px;
}

.hscroll .thumb {
  margin-right: 15px;
}

/* status bar */
.status {
  flex: none;
  display: flex;
  align-items: center;
  height: 21px;
  padding-right: 8px;
  background: #f3f3f3;
}

.msg {
  margin-right: auto;
  padding: 0 0 2px 7px;
}

.view {
  width: 40px;
  height: 21px;
}

.view.on {
  background: #c6c6c6;
}

.zoom {
  width: 18px;
}

.status input {
  width: 102px;
  height: 16px;
  margin: 0;
  appearance: none;
  background: linear-gradient(#999, #999) no-repeat center / 100% 1px;
}

.status input::-webkit-slider-thumb {
  appearance: none;
  width: 5px;
  height: 11px;
  background: #666;
}

.pct {
  width: 34px;
  padding-bottom: 2px;
  text-align: right;
}

/* taskbar */
.taskbar {
  flex: none;
  display: flex;
  height: 40px;
  background: linear-gradient(90deg, #25353d, #22333f 50%, #1c2745 85%);
  color: #fff;
}

.taskbar button {
  width: 49px;
}

.taskbar button:nth-child(-n+4) {
  width: 48px;
}

.taskbar .run {
  background: linear-gradient(#76b9ed, #76b9ed) no-repeat center bottom / 40px 2px;
}

.taskbar .front {
  background: linear-gradient(#76b9ed, #76b9ed) no-repeat center bottom / 100% 2px #4d5d64;
}

.tray {
  display: flex;
  align-items: center;
  margin-left: auto;
  padding-right: 25px;
}

.people {
  margin-right: 55px;
}

.weather {
  display: flex;
  align-items: center;
  gap: 8px;
  margin-right: 20px;
  font-size: 14px;
}

.t-up { margin-right: 13px; }
.t-pen { margin-right: 12px; }
.t-kbd { margin-right: 11px; }

.clock {
  display: flex;
  flex-direction: column;
  align-items: center;
  line-height: 18px;
  margin-right: 18px;
}

.notice {
  position: relative;
}

.notice b {
  position: absolute;
  left: 7px;
  top: 5px;
  width: 16px;
  height: 16px;
  border: 1px solid #999;
  border-radius: 50%;
  background: #333;
  font-size: 10px;
  line-height: 14px;
  text-align: center;
}
```
